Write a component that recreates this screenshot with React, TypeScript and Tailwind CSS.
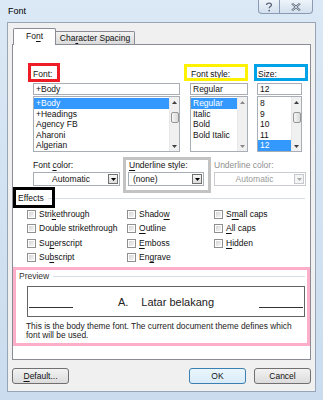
import React from "react";

const U = ({ c }: { c: string }) => (
  <span className="underline decoration-[1px] underline-offset-[1.5px]">{c}</span>
);

function Tri({ dir, color }: { dir: "up" | "down"; color: string }) {
  return (
    <svg width="5" height="3" viewBox="0 0 5 3">
      <polygon points={dir === "down" ? "0,0 5,0 2.5,3" : "0,3 5,3 2.5,0"} fill={color} />
    </svg>
  );
}

function ScrollBar({ thumb, color }: { thumb: boolean; color: string }) {
  return (
    <div className="w-[10px] h-full flex flex-col bg-[#f0f0f0] border-l border-[#e8e8e8]">
      <div className="h-[10px] flex items-center justify-center">
        <Tri dir="up" color={color} />
      </div>
      <div className="flex-1">
        {thumb ? (
          <div className="mt-[5px] h-[11px] mx-[0.5px] border border-[#979797] rounded-[2px] bg-gradient-to-r from-[#f5f5f5] to-[#d9d9d9]" />
        ) : null}
      </div>
      <div className="h-[10px] flex items-center justify-center">
        <Tri dir="down" color={color} />
      </div>
    </div>
  );
}

function ListBox({
  items,
  selected,
  thumb,
  arrow,
}: {
  items: string[];
  selected: number;
  thumb: boolean;
  arrow: string;
}) {
  return (
    <div className="mt-[1px] h-[56px] border border-[#a9adb5] bg-white flex">
      <div className="flex-1 pt-[1px] overflow-hidden">
        {items.map((it, i) => (
          <div
            key={it}
            className={
              i === selected
                ? "h-[10.6px] leading-[10.6px] pl-[2px] bg-[#3399ff] text-white"
                : "h-[10.6px] leading-[10.6px] pl-[2px]"
            }
          >
            {it}
          </div>
        ))}
      </div>
      <ScrollBar thumb={thumb} color={arrow} />
    </div>
  );
}

function Combo({
  text,
  disabled,
  left,
}: {
  text: React.ReactNode;
  disabled?: boolean;
  left?: boolean;
}) {
  return (
    <div
      className={
        disabled
          ? "mt-[1px] h-[14px] border border-[#c9ccd1] bg-white flex items-center text-[#9a9a9a]"
          : "mt-[1px] h-[14px] border border-[#a9adb5] bg-white flex items-center"
      }
    >
      <div className={left ? "flex-1 pl-[4px]" : "flex-1 text-center"}>{text}</div>
      <div
        className={
          disabled
            ? "w-[10px] h-[10px] mr-[1px] border border-[#c6c9cd] bg-[#f4f4f4] flex items-center justify-center"
            : "w-[10px] h-[10px] mr-[1px] border border-[#707070] bg-gradient-to-b from-[#f6f6f6] to-[#dcdcdc] flex items-center justify-center"
        }
      >
        <Tri dir="down" color={disabled ? "#a8a8a8" : "#000"} />
      </div>
    </div>
  );
}

function Check({ label }: { label: React.ReactNode }) {
  return (
    <div className="h-[14.5px] flex items-center gap-[3px]">
      <div className="w-[9px] h-[9px] border border-[#8e8f8f] bg-white p-[1px]">
        <div className="w-full h-full bg-gradient-to-br from-[#d5d5d5] to-[#f7f7f7]" />
      </div>
      <span>{label}</span>
    </div>
  );
}

function Button({ children, primary }: { children: React.ReactNode; primary?: boolean }) {
  return (
    <div
      className={
        primary
          ? "w-[57px] h-[16px] rounded-[3px] border border-[#3c7fb1] bg-gradient-to-b from-[#eaf6fd] to-[#d9ecf8] flex items-center justify-center"
          : "w-[57px] h-[16px] rounded-[3px] border border-[#707070] bg-gradient-to-b from-[#f2f2f2] to-[#dcdcdc] flex items-center justify-center"
      }
    >
      {children}
    </div>
  );
}

export default function App() {
  return (
    <div className="w-[323px] h-[400px] overflow-hidden bg-gradient-to-b from-[#dbe8f5] to-[#cadcee] font-['Liberation_Sans',Arial,sans-serif] text-[8.5px] text-[#111] relative">
      {/* title bar */}
      <div className="h-[22px] flex items-start">
        <div className="pl-[8px] pt-[6px] text-[9px] leading-[11px] text-black">Font</div>
        <div className="ml-auto mr-[10px] flex h-[14px] border border-t-0 border-[#8a9bb3] rounded-b-[4px] bg-gradient-to-b from-[#eef4fa] to-[#d3e0ee] overflow-hidden">
          <div className="w-[21px] flex items-center justify-center border-r border-[#8a9bb3]">
            <svg width="8" height="10" viewBox="0 0 8 10">
              <path
                d="M1.5 3 C1.5 0.5 6.5 0.5 6.5 3 C6.5 4.6 4.2 4.6 4.2 6.3"
                fill="none"
                stroke="#5a6578"
                strokeWidth="1.3"
              />
              <circle cx="4.2" cy="8.6" r="0.9" fill="#5a6578" />
            </svg>
          </div>
          <div className="w-[32px] flex items-center justify-center">
            <svg width="10" height="8" viewBox="0 0 10 8">
              <path d="M1 0.5 L9 7.5 M9 0.5 L1 7.5" stroke="#5a6578" strokeWidth="2.2" />
              <path d="M1 0.5 L9 7.5 M9 0.5 L1 7.5" stroke="#eef3f9" strokeWidth="0.8" />
            </svg>
          </div>
        </div>
      </div>

      {/* dialog body */}
      <div className="ml-[7px] w-[309px] h-[370px] border border-[#97a5b6] bg-[#f0f0f0] pt-[5px] px-[4px]">
        {/* tabs */}
        <div className="h-[16px] flex items-end">
          <div className="relative z-10 -mb-px ml-[1px] w-[43px] h-[17px] bg-white border border-b-0 border-[#898c95] rounded-t-[2px] flex items-center justify-center pb-[1px]">
            <span>
              Fo<U c="n" />t
            </span>
          </div>
          <div className="w-[79px] h-[13px] border border-l-0 border-b-0 border-[#898c95] rounded-tr-[2px] bg-gradient-to-b from-[#f3f3f3] to-[#dadada] flex items-center justify-center">
            <span>
              Cha<U c="r" />acter Spacing
            </span>
          </div>
        </div>

        {/* tab page */}
        <div className="relative w-[299px] h-[316px] border border-[#898c95] bg-white">
          {/* font / style / size */}
          <div className="pt-[22px] pl-[20px] flex">
            <div className="w-[147px]">
              <div className="h-[14px] flex items-center">
                <span>
                  <U c="F" />
                  ont:
                </span>
              </div>
              <div className="mt-[2px] h-[12px] border border-[#a9adb5] flex items-center pl-[2px]">+Body</div>
              <ListBox
                items={["+Body", "+Headings", "Agency FB", "Aharoni", "Algerian"]}
                selected={0}
                thumb={true}
                arrow="#404040"
              />
            </div>
            <div className="w-[58px] ml-[10px]">
              <div className="h-[14px] flex items-center pl-[1px]">
                <span>
                  Font st<U c="y" />le:
                </span>
              </div>
              <div className="mt-[2px] h-[12px] border border-[#a9adb5] flex items-center pl-[2px]">Regular</div>
              <ListBox
                items={["Regular", "Italic", "Bold", "Bold Italic"]}
                selected={0}
                thumb={false}
                arrow="#8a8a8a"
              />
            </div>
            <div className="w-[45px] ml-[9px]">
              <div className="h-[14px] flex items-center pl-[1px]">
                <span>
                  <U c="S" />
                  ize:
                </span>
              </div>
              <div className="mt-[2px] h-[12px] border border-[#a9adb5] flex items-center pl-[2px]">12</div>
              <ListBox items={["8", "9", "10", "11", "12"]} selected={4} thumb={true} arrow="#404040" />
            </div>
          </div>

          {/* color / underline row */}
          <div className="mt-[7px] pl-[20px] flex">
            <div className="w-[87px]">
              <div className="h-[12px] flex items-center">
                <span>
                  Font <U c="c" />
                  olor:
                </span>
              </div>
              <Combo text="Automatic" />
            </div>
            <div className="w-[76px] ml-[8px]">
              <div className="h-[12px] flex items-center pl-[1px]">
                <span>
                  <U c="U" />
                  nderline style:
                </span>
              </div>
              <Combo text="(none)" left />
            </div>
            <div className="w-[92px] ml-[10px]">
              <div className="h-[12px] flex items-center text-[#8f8f8f]">Underline color:</div>
              <Combo text="Automatic" disabled />
            </div>
          </div>

          {/* effects */}
          <div className="mt-[6px] h-[12px] pl-[5px] pr-[5px] flex items-center">
            <span>Effects</span>
            <div className="flex-1 ml-[4px] h-px bg-[#d5dfe5]" />
          </div>
          <div className="mt-[3px] pl-[14px] grid grid-cols-[100px_87px_80px]">
            <div>
              <Check label={<>Stri<U c="k" />ethrough</>} />
              <Check label="Double strikethrough" />
              <Check label={<>Su<U c="p" />erscript</>} />
              <Check label={<>Su<U c="b" />script</>} />
            </div>
            <div>
              <Check label={<>Shado<U c="w" /></>} />
              <Check label={<><U c="O" />utline</>} />
              <Check label={<><U c="E" />mboss</>} />
              <Check label={<>En<U c="g" />rave</>} />
            </div>
            <div>
              <Check label={<>S<U c="m" />all caps</>} />
              <Check label={<><U c="A" />ll caps</>} />
              <Check label={<><U c="H" />idden</>} />
            </div>
          </div>

          {/* preview */}
          <div className="mt-[6px] h-[11px] pl-[6px] pr-[5px] flex items-center">
            <span className="text-[#333]">Preview</span>
            <div className="flex-1 ml-[4px] h-px bg-[#d5dfe5]" />
          </div>
          <div className="mt-[4px] ml-[14px] w-[278px] h-[31px] border border-[#646464] flex">
            <div className="mt-[20px] ml-[1px] w-[44px] h-px bg-[#333]" />
            <div className="flex-1 flex justify-center pt-[9px] text-[11px] leading-[13px] text-[#222]">
              <span>A.</span>
              <span className="ml-[13px]">Latar belakang</span>
            </div>
            <div className="mt-[20px] mr-[1px] w-[44px] h-px bg-[#333]" />
          </div>
          <div className="mt-[5px] ml-[13px] text-[8.4px] leading-[9px] text-[#222]">
            <div>This is the body theme font. The current document theme defines which</div>
            <div>font will be used.</div>
          </div>

          {/* annotation boxes */}
          <div className="absolute left-[15px] top-[18px] w-[32px] h-[19px] border-[3px] border-[#ee1c24]" />
          <div className="absolute left-[171px] top-[19px] w-[64px] h-[17px] border-[3px] border-[#fff200]" />
          <div className="absolute left-[241px] top-[19px] w-[54px] h-[17px] border-[3px] border-[#00a2e8]" />
          <div className="absolute left-[110px] top-[112px] w-[88px] h-[36px] border-[3px] border-[#c3c3c3]" />
          <div className="absolute left-[0px] top-[142px] w-[42px] h-[21px] border-[3px] border-black" />
          <div className="absolute left-[0px] top-[222px] w-[297px] h-[79px] border-[3px] border-[#ffaec9]" />
        </div>

        {/* buttons */}
        <div className="mt-[8px] flex">
          <Button>
            <span>
              <U c="D" />
              efault...
            </span>
          </Button>
          <div className="ml-auto">
            <Button primary>OK</Button>
          </div>
          <div className="ml-[8px]">
            <Button>Cancel</Button>
          </div>
        </div>
      </div>
    </div>
  );
}
